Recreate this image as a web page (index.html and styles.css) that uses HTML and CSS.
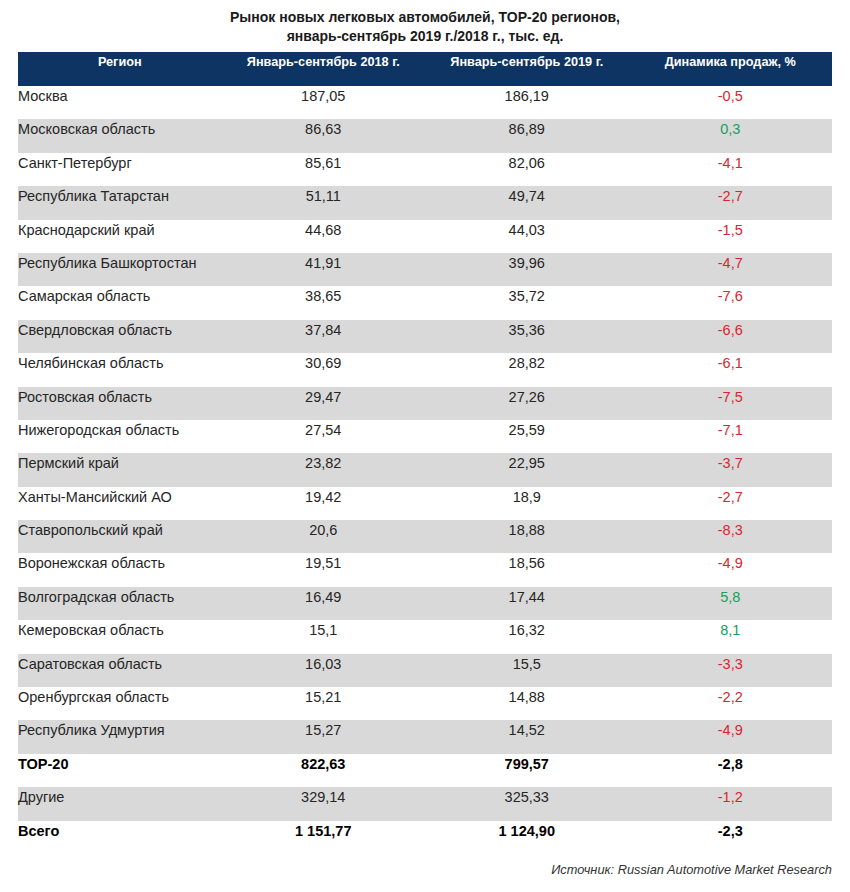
FILE: index.html
```html
<!DOCTYPE html>
<html lang="ru">
<head>
<meta charset="utf-8">
<title>Рынок новых легковых автомобилей</title>
<link rel="stylesheet" href="styles.css">
</head>
<body>
<div class="page">
  <h1 class="title">Рынок новых легковых автомобилей, TOP-20 регионов,<br>январь-сентябрь 2019 г./2018 г., тыс. ед.</h1>
  <table class="data">
    <thead>
      <tr><th>Регион</th><th>Январь-сентябрь 2018 г.</th><th>Январь-сентябрь 2019 г.</th><th>Динамика продаж, %</th></tr>
    </thead>
    <tbody>
      <tr><td>Москва</td><td>187,05</td><td>186,19</td><td class="neg">-0,5</td></tr>
      <tr><td>Московская область</td><td>86,63</td><td>86,89</td><td class="pos">0,3</td></tr>
      <tr><td>Санкт-Петербург</td><td>85,61</td><td>82,06</td><td class="neg">-4,1</td></tr>
      <tr><td>Республика Татарстан</td><td>51,11</td><td>49,74</td><td class="neg">-2,7</td></tr>
      <tr><td>Краснодарский край</td><td>44,68</td><td>44,03</td><td class="neg">-1,5</td></tr>
      <tr><td>Республика Башкортостан</td><td>41,91</td><td>39,96</td><td class="neg">-4,7</td></tr>
      <tr><td>Самарская область</td><td>38,65</td><td>35,72</td><td class="neg">-7,6</td></tr>
      <tr><td>Свердловская область</td><td>37,84</td><td>35,36</td><td class="neg">-6,6</td></tr>
      <tr><td>Челябинская область</td><td>30,69</td><td>28,82</td><td class="neg">-6,1</td></tr>
      <tr><td>Ростовская область</td><td>29,47</td><td>27,26</td><td class="neg">-7,5</td></tr>
      <tr><td>Нижегородская область</td><td>27,54</td><td>25,59</td><td class="neg">-7,1</td></tr>
      <tr><td>Пермский край</td><td>23,82</td><td>22,95</td><td class="neg">-3,7</td></tr>
      <tr><td>Ханты-Мансийский АО</td><td>19,42</td><td>18,9</td><td class="neg">-2,7</td></tr>
      <tr><td>Ставропольский край</td><td>20,6</td><td>18,88</td><td class="neg">-8,3</td></tr>
      <tr><td>Воронежская область</td><td>19,51</td><td>18,56</td><td class="neg">-4,9</td></tr>
      <tr><td>Волгоградская область</td><td>16,49</td><td>17,44</td><td class="pos">5,8</td></tr>
      <tr><td>Кемеровская область</td><td>15,1</td><td>16,32</td><td class="pos">8,1</td></tr>
      <tr><td>Саратовская область</td><td>16,03</td><td>15,5</td><td class="neg">-3,3</td></tr>
      <tr><td>Оренбургская область</td><td>15,21</td><td>14,88</td><td class="neg">-2,2</td></tr>
      <tr><td>Республика Удмуртия</td><td>15,27</td><td>14,52</td><td class="neg">-4,9</td></tr>
      <tr class="total"><td>TOP-20</td><td>822,63</td><td>799,57</td><td>-2,8</td></tr>
      <tr><td>Другие</td><td>329,14</td><td>325,33</td><td class="neg">-1,2</td></tr>
      <tr class="total"><td>Всего</td><td>1 151,77</td><td>1 124,90</td><td>-2,3</td></tr>
    </tbody>
  </table>
  <p class="source">Источник: Russian Automotive Market Research</p>
</div>
</body>
</html>
```

FILE: styles.css
```css
html, body {
  margin: 0;
  padding: 0;
  background: #ffffff;
}
body {
  font-family: "Liberation Sans", Arial, sans-serif;
  color: #222;
}
.page {
  width: 850px;
  padding-top: 8px;
}
.title {
  margin: 0 0 6px 0;
  font-size: 14px;
  line-height: 19px;
  font-weight: bold;
  text-align: center;
  color: #1a1a1a;
}
.data {
  margin-left: 18px;
  width: 814px;
  table-layout: fixed;
  border-collapse: collapse;
  border-spacing: 0;
}
.data th {
  background: #0d3463;
  color: #ffffff;
  font-size: 12.7px;
  font-weight: bold;
  height: 34px;
  padding: 3px 0 0 0;
  box-sizing: border-box;
  vertical-align: top;
  text-align: center;
  line-height: 15px;
}
.data td {
  height: 33.4px;
  box-sizing: border-box;
  padding: 2px 0 0 0;
  vertical-align: top;
  text-align: center;
  font-size: 14.5px;
  line-height: 17px;
  color: #262626;
}
.data td:first-child {
  text-align: left;
}
.data tbody tr:nth-child(even) td {
  background: #d9d9d9;
}
.data td.neg {
  color: #d8262e;
}
.data td.pos {
  color: #17a05d;
}
.data tr.total td {
  font-weight: bold;
  color: #000;
}
.source {
  margin: 8px 18px 0 0;
  text-align: right;
  font-style: italic;
  font-size: 12.8px;
  line-height: 16px;
  color: #333;
}
```
